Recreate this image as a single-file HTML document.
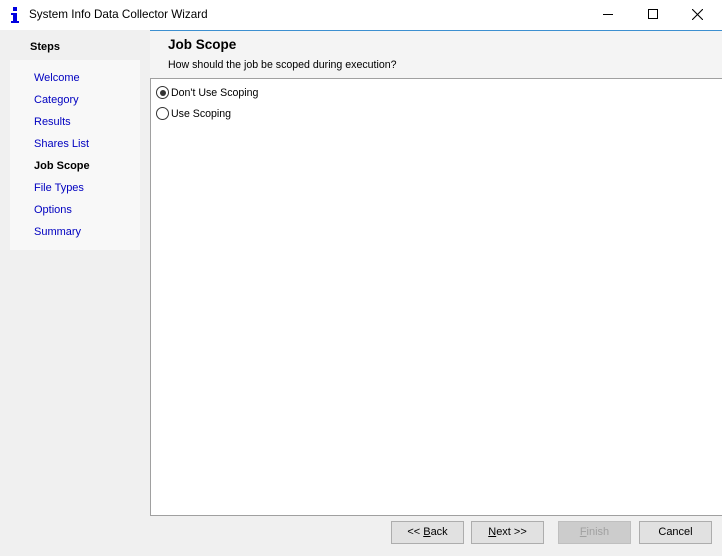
<!DOCTYPE html>
<html><head><style>
*{margin:0;padding:0;box-sizing:border-box}
body{width:722px;height:556px;background:#f0f0f0;font-family:"Liberation Sans",sans-serif;font-size:11px;position:relative;overflow:hidden;color:#000}
.a{position:absolute}
.title{left:0;top:0;width:722px;height:30px;background:#fff}
.link{color:#0000c0;position:absolute;left:34px;font-size:11px}
.btn{position:absolute;top:521px;width:73px;height:23px;background:#e1e1e1;border:1px solid #adadad;text-align:center;line-height:21px;font-size:11px}
</style></head><body>
<div class="a title">
<div class="a" style="left:11px;top:7px;width:8px;height:17px;">
<div class="a" style="left:2px;top:0;width:4px;height:4px;background:#0000e0"></div>
<div class="a" style="left:2px;top:6px;width:4px;height:10px;background:#0000e0"></div>
<div class="a" style="left:0;top:6px;width:6px;height:2px;background:#0000e0"></div>
<div class="a" style="left:0;top:14px;width:8px;height:2px;background:#0000e0"></div>
</div>
<div class="a" style="left:29px;top:8px;font-size:11.7px">System Info Data Collector Wizard</div>
<div class="a" style="left:603px;top:14px;width:10px;height:1px;background:#000"></div>
<div class="a" style="left:648px;top:9px;width:10px;height:10px;border:1px solid #000"></div>
<svg class="a" style="left:692px;top:9px" width="11" height="11"><path d="M0 0L11 11M11 0L0 11" stroke="#000" stroke-width="1.1"/></svg>
</div>
<div class="a" style="left:30px;top:41px;font-weight:bold;font-size:11px">Steps</div>
<div class="a" style="left:10px;top:60px;width:130px;height:190px;background:#f8f8f8"></div>
<div class="link" style="top:72px">Welcome</div>
<div class="link" style="top:94px">Category</div>
<div class="link" style="top:116px">Results</div>
<div class="link" style="top:138px">Shares List</div>
<div class="link" style="top:160px;color:#000;font-weight:bold">Job Scope</div>
<div class="link" style="top:182px">File Types</div>
<div class="link" style="top:204px">Options</div>
<div class="link" style="top:226px">Summary</div>
<div class="a" style="left:150px;top:30px;width:572px;height:48px;background:#f4f4f4;border-top:1px solid #3c8fd0"></div>
<div class="a" style="left:168px;top:37px;font-weight:bold;font-size:13.5px">Job Scope</div>
<div class="a" style="left:168px;top:59px;font-size:10.6px">How should the job be scoped during execution?</div>
<div class="a" style="left:150px;top:78px;width:573px;height:438px;background:#fff;border:1px solid #a0a0a0"></div>
<div class="a" style="left:156px;top:86px;width:13px;height:13px;border:1px solid #333;border-radius:50%;background:#fff"><div class="a" style="left:2.5px;top:2.5px;width:6px;height:6px;border-radius:50%;background:#333"></div></div>
<div class="a" style="left:171px;top:87px;font-size:10.6px">Don't Use Scoping</div>
<div class="a" style="left:156px;top:107px;width:13px;height:13px;border:1px solid #333;border-radius:50%;background:#fff"></div>
<div class="a" style="left:171px;top:108px;font-size:10.6px">Use Scoping</div>
<div class="btn" style="left:391px">&lt;&lt; <u>B</u>ack</div>
<div class="btn" style="left:471px"><u>N</u>ext &gt;&gt;</div>
<div class="btn" style="left:558px;background:#cccccc;border-color:#bfbfbf;color:#a0a0a0"><u>F</u>inish</div>
<div class="btn" style="left:639px">Cancel</div>
</body></html>
